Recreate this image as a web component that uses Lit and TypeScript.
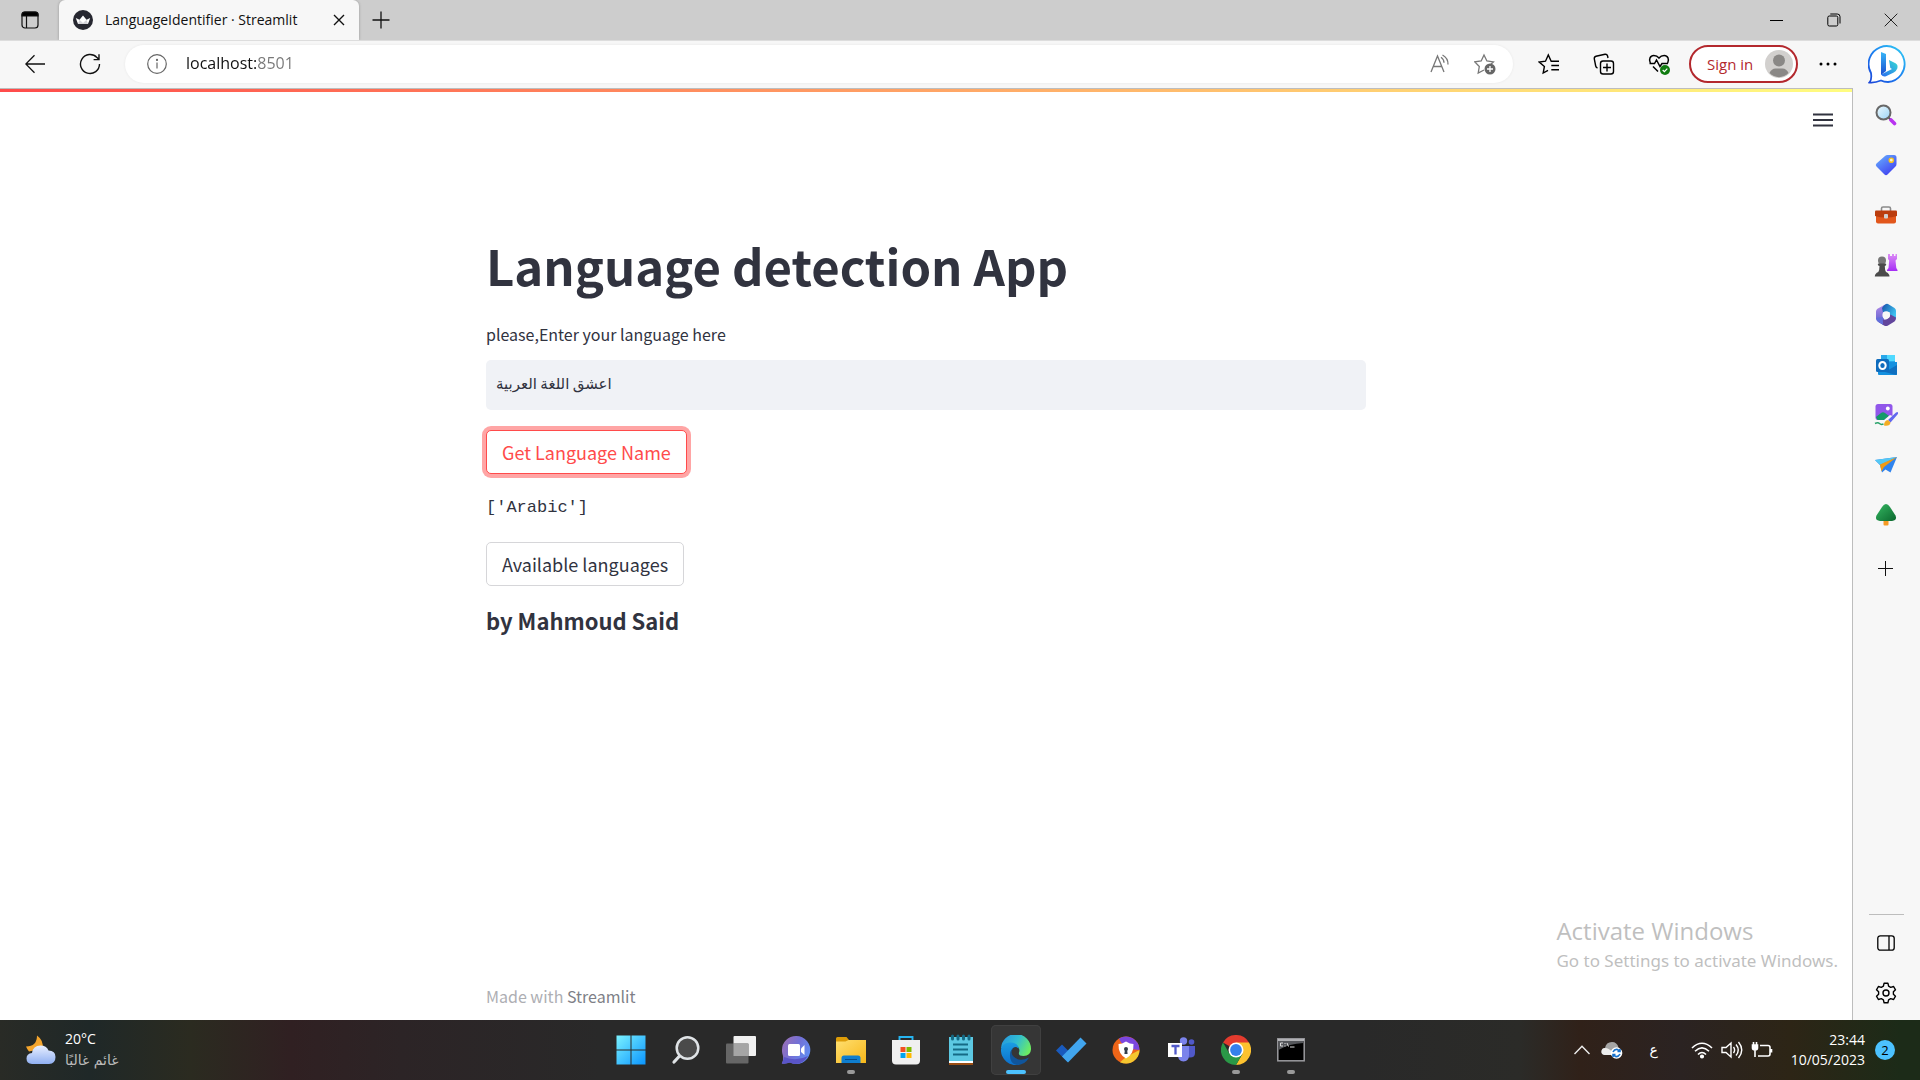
import { LitElement, html, css, type TemplateResult } from "lit";
import { customElement, state } from "lit/decorators.js";

type Item = { label: string; icon: TemplateResult; state?: "open" | "active" };

const tabActions = html`<svg width="20" height="20" viewBox="0 0 20 20" fill="none" stroke="#111" stroke-width="1.2"><rect x="2" y="2" width="16" height="16" rx="3"/><path d="M2 6V4.500Q2 2 4.500 2h11Q18 2 18 4.500V6z" fill="#000"/><path d="M6.500 6v12"/></svg>`;
const crown = html`<svg width="20" height="20" viewBox="0 0 20 20"><circle cx="10" cy="10" r="10" fill="#262730"/><path d="M2.800 8l3.700 1.800L10 5.500l3.500 4.300L17.200 8 15 14H5z" fill="#fff"/><path d="M5 14l1.500-4.200L10 13l3.500-3.200L15 14z" fill="#d5d5da"/></svg>`;
const cross = html`<svg width="12" height="12" viewBox="0 0 12 12" stroke="#111" stroke-width="1.400"><path d="M1 1l10 10M11 1L1 11"/></svg>`;
const plus = html`<svg width="18" height="18" viewBox="0 0 18 18" stroke="#111" stroke-width="1.300"><path d="M9 .5v17M.5 9h17"/></svg>`;
const minimize = html`<svg width="13" height="13" viewBox="0 0 13 13" stroke="#000" stroke-width="1"><path d="M0 6.500h13"/></svg>`;
const restore = html`<svg width="14" height="14" viewBox="0 0 14 14" fill="none" stroke="#000"><rect x=".8" y="3" width="10" height="10" rx="1.500"/><path d="M3.300 1h7Q13 1 13 3.700V10.500"/></svg>`;
const closeWin = html`<svg width="14" height="14" viewBox="0 0 14 14" stroke="#222" stroke-width="1"><path d="M.7.7l12.600 12.600M13.300.7L.7 13.300"/></svg>`;
const back = html`<svg width="20" height="20" viewBox="0 0 20 20" fill="none" stroke="#111" stroke-width="1.300"><path d="M20 10H1M9.500 1.300L.8 10l8.700 8.700"/></svg>`;
const reload = html`<svg width="22" height="22" viewBox="0 0 22 22" fill="none" stroke="#111" stroke-width="1.400"><path d="M20.500 11A9.500 9.500 0 1 1 18 4.600l2 2M20 1.200v5.400h-5.400"/></svg>`;
const info = html`<svg width="20" height="20" viewBox="0 0 20 20" fill="none" stroke="#666" stroke-width="1.200"><circle cx="10" cy="10" r="9.300"/><path d="M10 8.500v6"/><circle cx="10" cy="5.900" r=".5" fill="#666"/></svg>`;
const readAloud = html`<svg width="20" height="20" viewBox="0 0 20 20" fill="none" stroke="#777" stroke-width="1.300"><path d="M1 18L7.500 2 14 18M3.400 12.500h8.200M11 3.200q3 2 3 5.600M12.500 1q5.800 3.200 5.500 9.500"/></svg>`;
const starAdd = html`<svg width="22" height="22" viewBox="0 0 22 22" fill="none" stroke="#777" stroke-width="1.300"><path d="M10 17l-5.800 3 1.100-6.500L.8 8.900l6.400-.9L10 2l2.900 6 6.500.9-2.500 2.300"/><circle cx="16" cy="16" r="5.500" fill="#666" stroke="none"/><path d="M16 13v6M13 16h6" stroke="#fff"/></svg>`;
const favorites = html`<svg width="22" height="22" viewBox="0 0 22 22" fill="none" stroke="#000" stroke-width="1.400"><path d="M10 17.300L5.200 20l1.200-6.500L1.200 9l6.300-.8L10.300 2l2.900 6.200H21M13.300 12.500H21M13.300 16.700H21"/></svg>`;
const collections = html`<svg width="22" height="22" viewBox="0 0 22 22" fill="none" stroke="#000" stroke-width="1.400"><rect x="7.500" y="8" width="13" height="13" rx="2.500"/><path d="M14 10.500v8M10 14.500h8M4.500 15Q3 14.500 2.700 13L1.300 5.800Q1 3.700 3 3.200L12 1.300Q14 1 14.600 3L15 5"/></svg>`;
const health = html`<svg width="22" height="22" viewBox="0 0 22 22" fill="none" stroke="#000" stroke-width="1.500"><path d="M2.300 10C.4 6.500 2.300 2.500 5.800 2.500Q9 2.500 11 5q2-2.500 5.200-2.500c3.500 0 5.400 4 3.500 7.500M1.500 10.500h5L8.500 7l3.500 6.500 2-3h6M5 13.500l5 5"/><circle cx="17" cy="17" r="5" fill="#107c10" stroke="none"/><path d="M14.700 17l1.700 1.700 2.900-3" stroke="#fff" stroke-width="1.200"/></svg>`;
const avatar = html`<svg width="28" height="28" viewBox="0 0 28 28"><circle cx="14" cy="14" r="14" fill="#d2d0ce"/><circle cx="14" cy="10.500" r="6" fill="#8a8886"/><path d="M4.500 23q2-4.500 6-4.500h7q4 0 6 4.500a13 13 0 0 1-19 0z" fill="#8a8886"/></svg>`;
const dots = html`<svg width="18" height="4" viewBox="0 0 18 4"><circle cx="2" cy="2" r="1.500"/><circle cx="9" cy="2" r="1.500"/><circle cx="16" cy="2" r="1.500"/></svg>`;
const bing = html`<svg width="40" height="40" viewBox="0 0 40 40"><defs><linearGradient id="ring" x1="0" y1="1" x2=".9" y2="0"><stop offset="0" stop-color="#1b45d8"/><stop offset=".5" stop-color="#1a7df0"/><stop offset="1" stop-color="#30c8f4"/></linearGradient><linearGradient id="stem" x1="0" y1="0" x2="0" y2="1"><stop offset="0" stop-color="#38b6f8"/><stop offset="1" stop-color="#1a4fd0"/></linearGradient><linearGradient id="bowl" x1="1" y1="0" x2="0" y2="1"><stop offset="0" stop-color="#36dcd4"/><stop offset="1" stop-color="#2a6cf0"/></linearGradient></defs><path d="M1.500 38.500Q4 36 3 29A18 18 0 1 1 20 38Q16 38 13 36.500 7 39 1.500 38.500z" fill="#fff" stroke="url(#ring)" stroke-width="1.800"/><path d="M13 8l5 2v17l-5 4z" fill="url(#stem)"/><path d="M21 16l6.500 3.200q2.800 1.600 1.800 5.200-1 2.600-3.500 4L18 32.200q-3 1-5-1.700L24 25l-1.700-1z" fill="url(#bowl)"/></svg>`;
const menu = html`<svg width="20" height="14" viewBox="0 0 20 14" stroke="#31333f" stroke-width="2"><path d="M0 1.500h20M0 7h20M0 12.500h20"/></svg>`;

const side: Item[] = [
  { label: "Search", icon: html`<svg width="22" height="22" viewBox="0 0 22 22"><defs><linearGradient id="lens" x1="0" y1="0" x2="1" y2="1"><stop offset="0" stop-color="#eefaff"/><stop offset="1" stop-color="#9bd3f5"/></linearGradient></defs><path d="M13.500 13.500l3 3" stroke="#555" stroke-width="2"/><path d="M16 16l3.500 3.500" stroke="#b833f0" stroke-width="3.600" stroke-linecap="round"/><circle cx="8.500" cy="8.500" r="7" fill="url(#lens)" stroke="#686868" stroke-width="2"/></svg>` },
  { label: "Shopping", icon: html`<svg width="22" height="22" viewBox="0 0 22 22"><defs><linearGradient id="tag" x1="0" y1="0" x2=".7" y2="1"><stop offset="0" stop-color="#69b5ff"/><stop offset="1" stop-color="#4040f0"/></linearGradient></defs><path d="M10 2Q11 1 12.500 1H19q2.500 0 2.500 2.500V10q0 1.500-1 2.500l-8 8q-1.500 1.500-3 0l-8-8q-1.500-1.500 0-3z" fill="url(#tag)"/><circle cx="16.300" cy="6.200" r="2.100" fill="#f6f2d5" stroke="#f8c21c" stroke-width="1.400"/></svg>` },
  { label: "Tools", icon: html`<svg width="24" height="22" viewBox="0 0 24 22"><path d="M7.500 7V4.500Q7.500 3 9 3h6q1.500 0 1.500 1.500V7" fill="none" stroke="#8b8b8b" stroke-width="1.600"/><path d="M2 10h20v7.500q0 2-2 2H4q-2 0-2-2z" fill="#e2571c"/><path d="M1 7.500Q1 6.500 2 6.500h20q1 0 1 1V12q-5 1.500-11 1.500T1 12z" fill="#bb3d0e"/><rect x="10" y="10" width="4" height="4.500" rx="1" fill="#d0d0d0"/></svg>` },
  { label: "Games", icon: html`<svg width="24" height="24" viewBox="0 0 24 24"><defs><linearGradient id="rook" x1="0" y1="0" x2="0" y2="1"><stop offset="0" stop-color="#dc8cf6"/><stop offset="1" stop-color="#a52df5"/></linearGradient></defs><path d="M14 1h2v2h2V1h2v2h1.500V1H23v5l-1.500 1.500.8 7.500L23.500 17v1H13v-1l1.500-2 .7-7.500L14 6z" fill="url(#rook)"/><circle cx="8" cy="7.500" r="4" fill="#777"/><path d="M3.800 11.500q0-1 1-1h6.400q1 0 1 1t-1.400 1.500q0 4 1.200 6 3.500 1.500 3.500 4.500H.8q0-3 3.500-4.500 1.200-2 1.200-6-1.700-.500-1.700-1.500z" fill="#4b4b4b"/></svg>` },
  { label: "Microsoft 365", icon: html`<svg width="24" height="24" viewBox="0 0 24 24"><defs><linearGradient id="ma" x1="0" y1="0" x2="0" y2="1"><stop offset="0" stop-color="#b78be8"/><stop offset="1" stop-color="#5560cc"/></linearGradient><linearGradient id="mb" x1="0" y1="0" x2="1" y2=".6"><stop offset="0" stop-color="#1551a8"/><stop offset="1" stop-color="#3fc4f2"/></linearGradient></defs><path d="M12 1L3.500 5.800Q2 6.700 2 8.500v7q0 2 1.800 3L9 21.500l3-1.700-3-5.800V9.500z" fill="url(#ma)"/><path d="M12 1q1-.5 2 0l6.500 4Q22 6 22 7.800v8.700l-5.800-3.200L15.500 9 9 9.500 8 5q1.700-3 4-4z" fill="url(#mb)"/><path d="M22 14.500q0 3-1.500 4L14 22.500q-2 1.100-4 0L3.800 18.500 9 16.500q3 1 6-2l1.500-3z" fill="#62459c"/><path d="M8.800 14L9 21.800 3.800 18.800 2 15z" fill="#626fdb"/><circle cx="12.200" cy="12" r="3.800" fill="#f7f7f7"/></svg>` },
  { label: "Outlook", icon: html`<svg width="22" height="22" viewBox="0 0 22 22"><path d="M6 1h14v12H6z" fill="#28a8ea"/><path d="M12 1h8v6h-8z" fill="#50d9ff"/><path d="M3 8h19v12q0 1-1 1H4q-1 0-1-1z" fill="#1490df"/><path d="M22 11L10 18l11 3q1 0 1-1z" fill="#0f6fc0"/><rect x="1" y="5" width="13" height="13" rx="1.500" fill="#0f6cbd"/><ellipse cx="7.500" cy="11.500" rx="3.200" ry="3.600" fill="none" stroke="#fff" stroke-width="2"/></svg>` },
  { label: "Image Creator", icon: html`<svg width="24" height="24" viewBox="0 0 24 24"><rect x="1.500" y="1" width="17" height="16" rx="2.500" fill="#9157ea"/><path d="M0 20V15.500L8 8l12 8v5z" fill="#f7f7f7" opacity="0"/><circle cx="13.800" cy="5.500" r="1.900" fill="#fff"/><path d="M2 14l5-4q2-1.500 4 0l4 3-5 4H3.500z" fill="#149a68"/><path d="M9 18l7-6 5 2-5 8-7 2z" fill="#f7f7f7"/><path d="M1 20.500q3-1.500 4.500 0t4 .5" fill="none" stroke="#2ba36b" stroke-width="1.500"/><path d="M14 17l8-7.500q1.500-1 2 0t-.5 2L16.500 19.500z" fill="#6268ef"/><path d="M10 22.500q0-5 4-5.500l2.500 2.500q-.5 4-6.500 3z" fill="#f3ad23"/></svg>` },
  { label: "Drop", icon: html`<svg width="24" height="22" viewBox="0 0 24 22"><path d="M1 6l22-3-6.500 15.500-5-3-3.500 3L6 11z" fill="#2f83ee"/><path d="M1 6l22-3L6 11z" fill="#55c8f4"/><path d="M23 3L6 10.500l1.500 7L10 13z" fill="#f29a13"/></svg>` },
  { label: "E-tree", icon: html`<svg width="24" height="24" viewBox="0 0 24 24"><defs><linearGradient id="leaf" x1="0" y1="0" x2="1" y2="1"><stop offset="0" stop-color="#35b862"/><stop offset="1" stop-color="#0b672e"/></linearGradient></defs><rect x="9.500" y="16" width="5" height="6.500" rx="1" fill="#f59a23"/><path d="M12 1q2 0 4 3l5.500 8.500q2 5-3.500 5.500H6q-5.500-.500-3.500-5.500L8 4q2-3 4-3z" fill="url(#leaf)"/></svg>` },
];
const addApp = html`<svg width="16" height="16" viewBox="0 0 16 16" stroke="#111"><path d="M7.500 0v15M0 7.500h15"/></svg>`;
const panel = html`<svg width="18" height="16" viewBox="0 0 18 16" fill="none" stroke="#000" stroke-width="1.300"><rect x=".8" y=".8" width="16.400" height="14.400" rx="2.500"/><path d="M12 1v14"/></svg>`;
const gear = html`<svg width="22" height="22" viewBox="-11 -11 22 22" fill="none" stroke="#000" stroke-width="1.400" stroke-linejoin="round"><path d="M-1.900-9.800H1.900L2.600-6.900 4.700-5.700 7.600-6.500 9.500-3.200 7.400-1.200V1.200L9.500 3.200 7.600 6.500 4.700 5.700 2.600 6.900 1.900 9.800H-1.900L-2.600 6.900-4.700 5.700-7.600 6.500-9.500 3.200-7.400 1.200V-1.200L-9.500-3.200-7.600-6.500-4.700-5.700-2.600-6.900z"/><circle r="3"/></svg>`;

const tasks: Item[] = [
  { label: "Start", icon: html`<svg width="30" height="30" viewBox="0 0 30 30"><defs><linearGradient id="win" x1="0" y1="0" x2="1" y2="1"><stop offset="0" stop-color="#7bf2ff"/><stop offset="1" stop-color="#0a95ff"/></linearGradient></defs><path d="M.5.5h14v14H.5zM15.500.5h14v14h-14zM.5 15.500h14v14H.5zM15.500 15.500h14v14h-14z" fill="url(#win)"/></svg>` },
  { label: "Search", icon: html`<svg width="30" height="30" viewBox="0 0 30 30" fill="none" stroke="#dfe3e6"><path d="M9.500 20L3 27" stroke-width="3.200" stroke-linecap="round"/><circle cx="16.500" cy="13" r="10.800" fill="#4a4a4a" stroke-width="2.500"/></svg>` },
  { label: "Task view", icon: html`<svg width="30" height="30" viewBox="0 0 30 30"><rect x="7.500" y="1" width="22.500" height="20" rx="1" fill="#f0f0f0"/><rect x="0" y="8.500" width="22.500" height="20" rx="1" fill="#666"/><rect x="7.500" y="8.500" width="15" height="12.500" fill="#a5a5a5"/></svg>` },
  { label: "Chat", icon: html`<svg width="30" height="30" viewBox="0 0 30 30"><defs><linearGradient id="chat" x1="0" y1="0" x2="1" y2=".5"><stop offset="0" stop-color="#a26fae"/><stop offset=".55" stop-color="#7370d6"/><stop offset="1" stop-color="#638bf0"/></linearGradient></defs><path d="M15 1A14 14 0 1 1 9 27.500Q5 29 .8 28.500 2.500 26 2 21 .8 18 1 15A14 14 0 0 1 15 1z" fill="url(#chat)"/><path d="M3.300 22Q15 27 27 21 22 29 15 29 11.500 29 9 27.500 5 29 .8 28.500 2 26 3.300 22z" fill="#5a55c8"/><rect x="7" y="9" width="12" height="12" rx="1.500" fill="#fff"/><path d="M20 13.500l3.500-3.500v10L20 17z" fill="#fff"/></svg>` },
  { label: "File Explorer", state: "open", icon: html`<svg width="30" height="30" viewBox="0 0 30 30"><defs><linearGradient id="folder" x1="0" y1="0" x2="1" y2="1"><stop offset="0" stop-color="#ffdf70"/><stop offset="1" stop-color="#f7b719"/></linearGradient></defs><path d="M0 3.500Q0 2 1.500 2h9L13 5H25v8H0z" fill="#dd9c08"/><path d="M0 6.500h9.500L12.500 5H30v23H0z" fill="url(#folder)"/><path d="M5.500 28v-5q0-2.500 2.500-2.500h14q2.500 0 2.500 2.500v5z" fill="#0f7ecf"/><path d="M9 24.500h12" stroke="#064d8c"/></svg>` },
  { label: "Microsoft Store", icon: html`<svg width="30" height="30" viewBox="0 0 30 30"><path d="M8.500 6.500V2h13v4.500" fill="none" stroke="#26b4f0" stroke-width="1.900"/><path d="M1 5h28v20.500q0 4-4 4H5q-4 0-4-4z" fill="#f0f0f0"/><path d="M9.500 12h5v5h-5z" fill="#f25022"/><path d="M15.500 12h5v5h-5z" fill="#7fba00"/><path d="M9.500 18h5v5h-5z" fill="#00a4ef"/><path d="M15.500 18h5v5h-5z" fill="#ffb900"/></svg>` },
  { label: "Notepad", icon: html`<svg width="26" height="32" viewBox="0 0 26 32"><path d="M1 27h24v4H1z" fill="#9a4d12"/><path d="M1 26h24v3H1z" fill="#fff"/><path d="M1 3h24v24H1z" fill="#5cc8e2"/><path d="M5 10.500h15M5 15.500h15M5 20.500h15" stroke="#156a85" stroke-width="1.800"/><path d="M4.500 2v3M10 2v3M15.500 2v3M21 2v3" stroke="#156a85" stroke-width="3" stroke-linecap="round"/></svg>` },
  { label: "Microsoft Edge", state: "active", icon: html`<svg width="30" height="30" viewBox="0 0 30 30"><defs><linearGradient id="ea" x1="0" y1=".2" x2="1" y2=".6"><stop offset="0" stop-color="#2696df"/><stop offset=".5" stop-color="#31bdd1"/><stop offset="1" stop-color="#6cec62"/></linearGradient><linearGradient id="eb" x1="0" y1="0" x2="0" y2="1"><stop offset="0" stop-color="#1b9de2"/><stop offset="1" stop-color="#0c6fcb"/></linearGradient></defs><path d="M0 13.500A15 15 0 0 1 30 14.500Q29.500 21 22.500 21 17 21 18 17.500 19 15 17.500 12.500 12 5 0 13.500z" fill="url(#ea)"/><path d="M0 14Q2 7 9.500 7.500 17 8 18 13.500 15 11 12 13 8 17 10.500 22.500 13 28 19 29.500A15 15 0 0 1 0 14z" fill="url(#eb)"/><path d="M12.300 13Q9 17 12 21q6 6.500 16 1.500-4 7.500-12 7.500Q8.500 28.500 9 20 9.500 15 12.300 13z" fill="#10559b"/></svg>` },
  { label: "To Do", icon: html`<svg width="32" height="30" viewBox="0 0 32 30"><path d="M1 15.500L7 9.500l10.500 10.500L12.500 27z" fill="#195abd"/><path d="M7 21.500L25.500 2.500l6 6L13 27.500z" fill="#41a5ee"/></svg>` },
  { label: "Secure Browser", icon: html`<svg width="28" height="28" viewBox="0 0 28 28"><circle cx="14" cy="14" r="13.500" fill="#ee6518"/><path d="M7 2.500A13.500 13.500 0 0 1 27.500 14L18 13 9 6.500z" fill="#7b46df"/><path d="M27.500 14A13.500 13.500 0 0 1 8 26.200L14 21z" fill="#f4c62f"/><path d="M14 5.500q4 2.500 7.500 2.500.5 10-7.500 14.500Q6 18 6.500 8 10 8 14 5.500z" fill="#fff"/><circle cx="14" cy="13" r="2" fill="#333e4a"/><path d="M13 13h2l.6 5h-3.200z" fill="#333e4a"/></svg>` },
  { label: "Teams", icon: html`<svg width="30" height="30" viewBox="0 0 30 30"><circle cx="17.500" cy="6" r="3.700" fill="#7b83eb"/><circle cx="25.500" cy="7" r="2.800" fill="#5059c9"/><path d="M20 11h9v7q0 4.500-5 4.500h-4z" fill="#5059c9"/><path d="M12 11h11v9q0 6-5.500 6.500Q12 26 12 20z" fill="#7b83eb"/><rect x="2" y="8" width="14" height="14" fill="#fff"/><path d="M5.500 11h8M9.500 11v8.500" stroke="#5059c9" stroke-width="2.300"/></svg>` },
  { label: "Google Chrome", state: "open", icon: html`<svg width="30" height="30" viewBox="0 0 30 30"><path d="M15 15L2 7.500A15 15 0 0 1 28 7.500z" fill="#e33b2e"/><path d="M15 15V7.500h13A15 15 0 0 1 15 30l6.500-11.300z" fill="#fdc22f"/><path d="M15 15l6.500 3.700L15 30A15 15 0 0 1 2 7.500l6.500 11.200z" fill="#2a9847"/><circle cx="15" cy="15" r="7.500" fill="#fff"/><circle cx="15" cy="15" r="5.900" fill="#3580ec"/></svg>` },
  { label: "Command Prompt", state: "open", icon: html`<svg width="28" height="24" viewBox="0 0 28 24"><rect x=".8" y=".8" width="26.400" height="22" fill="#000" stroke="#9b9b9f" stroke-width="1.500"/><path d="M1.500 2h25v3Q12 5.500 1.500 12z" fill="#55575b"/><path d="M1 2h26" stroke="#c8c8cc" stroke-width="1.600"/><path d="M6 5H3.500v3H6M8 5v1M8 7.500v1M10 5l1.500 3.500M13 9h4.500" fill="none" stroke="#ddd"/></svg>` },
];

const weather = html`<svg width="30" height="30" viewBox="0 0 30 30"><defs><linearGradient id="cloud" x1="0" y1="0" x2="0" y2="1"><stop offset="0" stop-color="#e9f0ff"/><stop offset="1" stop-color="#90b0f2"/></linearGradient></defs><path d="M11 .5q7 5 5.500 13L3 16.500q-2-2.500-3-5Q11 11.500 11 .5z" fill="#f4a52d"/><path d="M6 29q-5.500-.5-5.500-5.500T6 18q1-7.500 8.500-7.500 6 0 8 5Q29.500 15.500 29.500 22T23 29z" fill="url(#cloud)"/></svg>`;
const chevron = html`<svg width="16" height="10" viewBox="0 0 16 10" fill="none" stroke="#eee" stroke-width="1.400"><path d="M.5 9L8 1.200 15.500 9"/></svg>`;
const cloudSync = html`<svg width="22" height="18" viewBox="0 0 22 18"><path d="M3.500 14Q0 13.500.5 10 1 7 4 7 5 1 11 1q5 0 6.500 5.500v7.500z" fill="#a5a5a5"/><path d="M3.500 14Q0 13.500.5 10 1 7 4 7q4 0 7 4v3z" fill="#ededed"/><circle cx="15.500" cy="12" r="5.800" fill="#fff"/><path d="M12 11q1.500-3 4.500-2.500l2 1.500M19 8v2.500h-2.500M19 13q-1.500 3-4.500 2.500l-2-1.500M12 16v-2.500h2.500" fill="none" stroke="#1671cc" stroke-width="1.600"/></svg>`;
const wifi = html`<svg width="22" height="18" viewBox="0 0 22 18" fill="none" stroke="#fff" stroke-width="1.600"><path d="M1 7Q11-2.500 21 7M4 10.300q7-6.800 14 0M7 13.500q4-4 8 0"/><circle cx="11" cy="15.500" r="1.300" fill="#fff"/></svg>`;
const speaker = html`<svg width="22" height="18" viewBox="0 0 22 18" fill="none" stroke="#fff" stroke-width="1.400"><path d="M1 6.500h4L10 2v14l-5-4.500H1zM12.500 6q2.200 3 0 6M15 3.500q4.500 5.500 0 11M17.500 1q6.500 8 0 16"/></svg>`;
const battery = html`<svg width="22" height="18" viewBox="0 0 22 18" fill="none" stroke="#fff" stroke-width="1.600"><path d="M9 4.500h8q2 0 2 2v6.500q0 2-2 2H7M20.500 8v3.500"/><path d="M1.500 4h5v3q0 2-2.500 2t-2.500-2zM2.500 1v3M5.500 1v3M4 9v7" fill="#fff"/></svg>`;

@customElement("app-root")
export class AppRoot extends LitElement {
  @state() private phrase = "اعشق اللغة العربية";

  static styles = css`
    :host {
      --ui: "Open Sans", "Noto Sans", sans-serif;
      --page: "Noto Sans CJK SC", "Open Sans", sans-serif;
      --chrome: #f7f7f7;
      --ink: #31333f;
      --primary: #ff4b4b;
      display: grid;
      grid-template-rows: 40px 48px 1fr 60px;
      min-height: 100vh;
      font: 14px/20px var(--ui);
      color: #111;
      background: #fff;
    }
    *, *::before, *::after { box-sizing: border-box; }
    button {
      font: inherit; color: inherit; background: none; border: 0; padding: 0; margin: 0;
      display: flex; align-items: center; justify-content: center; cursor: pointer;
    }
    svg { display: block; flex: none; }
    a { color: inherit; text-decoration: none; }

    .titlebar { display: flex; background: #cdcdcd; padding-right: 1px; }
    .titlebar .actions { width: 59px; }
    .tab {
      display: flex; align-items: center; gap: 12px; width: 300px; padding: 0 12px 0 14px;
      background: var(--chrome); border-radius: 6px 6px 0 0; box-shadow: 0 0 3px #0004; clip-path: inset(0 -3px 0 -3px);
    }
    .tab .name { flex: 1; white-space: nowrap; }
    .tab .close { width: 16px; height: 20px; }
    .new { width: 43px; }
    .spacer { flex: 1; }
    .win { width: 57px; }

    .toolbar {
      display: flex; align-items: center; background: var(--chrome);
      padding: 0 12px 0 7px; box-shadow: inset 0 1px #ddd;
    }
    .nav { width: 55px; height: 40px; }
    .address {
      flex: 1; display: flex; align-items: center; height: 38px; margin-left: 8px; padding: 0 16px 0 22px;
      background: #fff; border-radius: 19px; box-shadow: 0 0 3px #0001;
    }
    .address .info { width: 20px; }
    .address input {
      flex: 1; min-width: 0; border: 0; outline: 0; padding: 0 0 2px; margin: 0 0 0 19px; height: 30px;
      font: 16px/24px var(--ui); color: transparent;
      background: linear-gradient(90deg, #111 71px, #777 71px); background-clip: text; -webkit-background-clip: text;
    }
    .address .tool { width: 24px; margin-left: 21px; }
    .tools { display: flex; gap: 15px; padding: 0 10px 0 16px; }
    .tools button { width: 40px; height: 38px; }
    .signin {
      width: 109px; height: 38px; border: 2px solid #b3282d; border-radius: 19px; background: #fff;
      color: #b3282d; font-size: 15px; justify-content: space-between; padding: 0 3px 0 16px;
    }
    .more { width: 60px; height: 38px; }
    .bing { width: 40px; margin-left: 10px; }

    .body { display: grid; grid-template-columns: 1fr 67px; min-height: 0; }
    .view {
      position: relative; display: flex; flex-direction: column; background: #fff;
      border-top: 1px solid #bdbdbd; border-right: 1px solid #bdbdbd;
    }
    .stripe { height: 3px; background: linear-gradient(90deg, var(--primary), #fffd80); }
    .head { display: flex; justify-content: flex-end; padding: 21px 19px 0; height: 48px; }
    .head button { width: 20px; height: 14px; }
    .page {
      flex: 1; display: flex; flex-direction: column; align-items: flex-start;
      width: 880px; max-width: 100%; margin: 0 auto; color: var(--ink); font: 18px/32px var(--page);
    }
    h1 { margin: 92px 0 24px; font-size: 49px; line-height: 66px; font-weight: 700; }
    label { font-size: 16px; line-height: 24px; margin-bottom: 14px; }
    .phrase {
      width: 100%; height: 50px; border: 0; border-radius: 5px; background: #f0f2f6; outline: 0;
      padding: 0 10px 6px; font: 15px/24px var(--page), "DejaVu Sans"; color: var(--ink);
    }
    .btn { height: 44px; padding: 0 15px; border: 1px solid #d6d6d9; border-radius: 5px; background: #fff; margin-top: 20px; }
    .btn.focus { border-color: var(--primary); color: var(--primary); box-shadow: 0 0 0 4px #ff4b4b80; }
    .result { margin: 20px 0 0; font: 17px/28px "Liberation Mono", monospace; }
    h3 { margin: 18px 0 0; font-size: 22px; line-height: 32px; font-weight: 600; }
    footer { margin-top: auto; padding-bottom: 12px; font-size: 16px; line-height: 24px; color: #adaeb3; }
    footer a { color: #7e7f87; }
    .mark {
      position: absolute; right: 14px; bottom: 45px; color: #bfbfbf;
      font: 17px/28px "Noto Sans", sans-serif; pointer-events: none;
    }
    .mark strong { display: block; font: 24px/32px var(--ui); }

    .side { display: flex; flex-direction: column; align-items: center; background: var(--chrome); padding: 2px 1px 0 0; }
    .side button { width: 50px; height: 50px; }
    .side .add { margin-top: 4px; }
    .side .rule { width: 35px; height: 1px; background: #bdbdbd; margin-top: auto; margin-bottom: 3px; }
    .side .last { margin-bottom: 2px; }

    .taskbar {
      display: grid; grid-template-columns: 1fr auto 1fr; align-items: center; color: #fff; font-size: 14px;
      background: linear-gradient(90deg, #292b26, #1f2828 90px, #2b2b20 190px, #302022 290px, #2c2426 400px, #292929 600px, #292929 1360px, #2b2b28 1520px, #302119 1580px, #2b2322 1680px, #2d2516 1790px, #1c2b18 1900px);
    }
    .weather { display: flex; gap: 9px; justify-self: start; padding-left: 26px; text-align: left; line-height: 20px; }
    .weather small { display: block; color: #bbb; font: 14px/22px "DejaVu Sans", sans-serif; }
    .apps { display: flex; gap: 5px; padding-left: 2px; }
    .apps button { position: relative; width: 50px; height: 50px; border-radius: 5px; }
    .apps .active { background: #363636; box-shadow: inset 0 0 0 1px #404040; }
    .apps .open::after, .apps .active::after {
      content: ""; position: absolute; left: 50%; bottom: 1px; width: 8px; height: 4px; margin-left: -4px; border-radius: 2px; background: #999;
    }
    .apps .active::after { width: 20px; margin-left: -10px; background: #4cc2ff; }
    .tray { display: flex; align-items: center; justify-self: end; padding-right: 25px; }
    .tray button { width: 30px; height: 40px; }
    .tray .lang { width: 54px; font: 14px/20px "DejaVu Sans", sans-serif; }
    .tray .system { width: 90px; gap: 8px; margin-left: 6px; }
    .tray .clock { width: auto; margin-left: 14px; text-align: right; line-height: 20px; }
    .tray .count { width: 20px; height: 20px; margin-left: 10px; border-radius: 50%; background: #4cc2ff; color: #000; font-size: 13px; }
  `;

  render() {
    return html`
      <header class="titlebar">
        <button class="actions" aria-label="Tab actions">${tabActions}</button>
        <div class="tab">${crown}<span class="name">LanguageIdentifier · Streamlit</span><button class="close" aria-label="Close tab">${cross}</button></div>
        <button class="new" aria-label="New tab">${plus}</button>
        <span class="spacer"></span>
        <button class="win" aria-label="Minimize">${minimize}</button>
        <button class="win" aria-label="Restore">${restore}</button>
        <button class="win" aria-label="Close">${closeWin}</button>
      </header>
      <nav class="toolbar">
        <button class="nav" aria-label="Back">${back}</button>
        <button class="nav" aria-label="Reload">${reload}</button>
        <div class="address">
          <button class="info" aria-label="Site information">${info}</button>
          <input aria-label="Address" value="localhost:8501" />
          <button class="tool" aria-label="Read aloud">${readAloud}</button>
          <button class="tool" aria-label="Add to favorites">${starAdd}</button>
        </div>
        <div class="tools">
          <button aria-label="Favorites">${favorites}</button>
          <button aria-label="Collections">${collections}</button>
          <button aria-label="Browser essentials">${health}</button>
        </div>
        <button class="signin"><span>Sign in</span>${avatar}</button>
        <button class="more" aria-label="Settings and more">${dots}</button>
        <button class="bing" aria-label="Bing">${bing}</button>
      </nav>
      <div class="body">
        <div class="view">
          <div class="stripe"></div>
          <div class="head"><button aria-label="Menu">${menu}</button></div>
          <main class="page">
            <h1>Language detection App</h1>
            <label for="phrase">please,Enter your language here</label>
            <input id="phrase" class="phrase" type="text" .value=${this.phrase}
              @input=${(e: Event) => (this.phrase = (e.target as HTMLInputElement).value)} />
            <button class="btn focus">Get Language Name</button>
            <p class="result">['Arabic']</p>
            <button class="btn">Available languages</button>
            <h3>by Mahmoud Said</h3>
            <footer>Made with <a href="#streamlit">Streamlit</a></footer>
          </main>
          <div class="mark"><strong>Activate Windows</strong>Go to Settings to activate Windows.</div>
        </div>
        <aside class="side">
          ${side.map((s) => html`<button aria-label=${s.label}>${s.icon}</button>`)}
          <button class="add" aria-label="Customize">${addApp}</button>
          <div class="rule"></div>
          <button aria-label="Hide sidebar">${panel}</button>
          <button class="last" aria-label="Sidebar settings">${gear}</button>
        </aside>
      </div>
      <div class="taskbar">
        <button class="weather">${weather}<span>20°C<small>غائم غالبًا</small></span></button>
        <div class="apps">${tasks.map((t) => html`<button class=${t.state ?? "idle"} aria-label=${t.label}>${t.icon}</button>`)}</div>
        <div class="tray">
          <button aria-label="Show hidden icons">${chevron}</button>
          <button aria-label="OneDrive">${cloudSync}</button>
          <button class="lang">ع</button>
          <button class="system" aria-label="Network, volume and battery">${wifi}${speaker}${battery}</button>
          <button class="clock"><span>23:44<br />10/05/2023</span></button>
          <button class="count" aria-label="2 notifications">2</button>
        </div>
      </div>
    `;
  }
}
